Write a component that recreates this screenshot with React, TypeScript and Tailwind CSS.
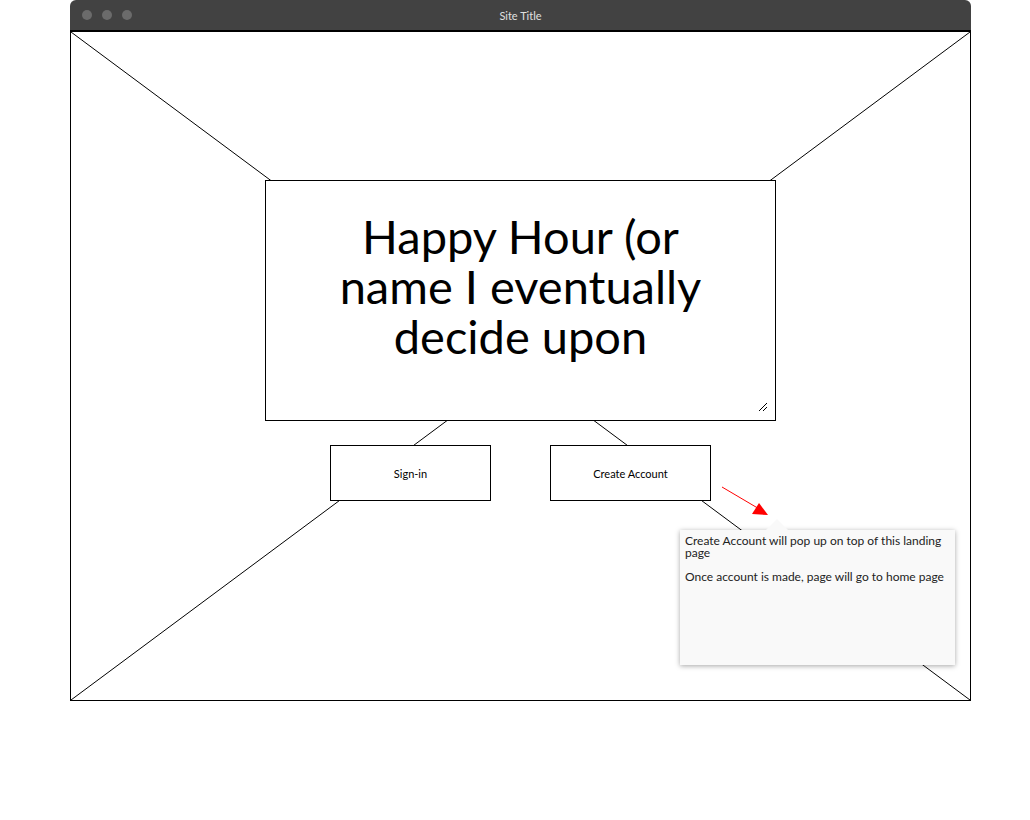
export default function App() {
  return (
    <div className="w-[1030px] h-[820px] bg-white pl-[70px]" style={{ fontFamily: 'Lato, "Noto Sans", sans-serif' }}>
      <div className="w-[901px]">
        {/* Title bar */}
        <div className="relative h-[32px] bg-[#424242] rounded-t-[6px] border-b-[2px] border-black flex items-center">
          <div className="flex gap-[10px] pl-[12px]">
            <span className="w-[10px] h-[10px] rounded-full bg-[#6b6b6b]" />
            <span className="w-[10px] h-[10px] rounded-full bg-[#6b6b6b]" />
            <span className="w-[10px] h-[10px] rounded-full bg-[#6b6b6b]" />
          </div>
          <span className="absolute inset-x-0 top-[9px] text-center text-[11px] leading-[13px] text-[#e0e0e0]">Site Title</span>
        </div>

        {/* Page body */}
        <div className="relative h-[669px] border border-t-0 border-black">
          <svg className="absolute inset-0 w-full h-full" viewBox="0 0 899 668" preserveAspectRatio="none">
            <line x1="0" y1="0" x2="899" y2="668" stroke="black" strokeWidth="1" />
            <line x1="899" y1="0" x2="0" y2="668" stroke="black" strokeWidth="1" />
          </svg>

          <div className="relative flex flex-col items-center pt-[148px]">
            <div className="relative w-[511px] h-[241px] bg-white border border-black flex items-start justify-center pt-[30px]">
              <p className="text-[47px] leading-[50px] text-black text-center w-[420px]">
                Happy Hour (or name I eventually decide upon
              </p>
              <svg className="absolute right-[7px] bottom-[8px]" width="10" height="10" viewBox="0 0 10 10">
                <line x1="1" y1="9" x2="9" y2="1" stroke="black" strokeWidth="1" />
                <line x1="5" y1="9" x2="9" y2="5" stroke="black" strokeWidth="1" />
              </svg>
            </div>

            <div className="flex gap-[59px] mt-[24px]">
              <div className="w-[161px] h-[56px] bg-white border border-black flex items-center justify-center pt-[2px] text-[11px] text-black">
                Sign-in
              </div>
              <div className="w-[161px] h-[56px] bg-white border border-black flex items-center justify-center pt-[2px] text-[11px] text-black">
                Create Account
              </div>
            </div>
          </div>

          {/* Red arrow */}
          <svg className="absolute left-[640px] top-[451px]" width="60" height="40" viewBox="0 0 60 40">
            <line x1="11" y1="4" x2="50" y2="27" stroke="#ff0000" strokeWidth="1" />
            <polygon points="57,32 41,31 48,20" fill="#ff0000" />
          </svg>

          {/* Note */}
          <div className="absolute left-[609px] top-[498px] w-[275px] h-[135px] bg-[#f9f9f9] shadow-[0_1px_5px_rgba(0,0,0,0.35)] px-[5px] pt-[5px] text-[12px] leading-[12px] text-[#222]">
            <div className="absolute -top-[11px] left-[86px] w-0 h-0 border-x-[11px] border-x-transparent border-b-[11px] border-b-[#f9f9f9]" />
            <p>Create Account will pop up on top of this landing page</p>
            <p className="mt-[12px]">Once account is made, page will go to home page</p>
          </div>
        </div>
      </div>
    </div>
  )
}
